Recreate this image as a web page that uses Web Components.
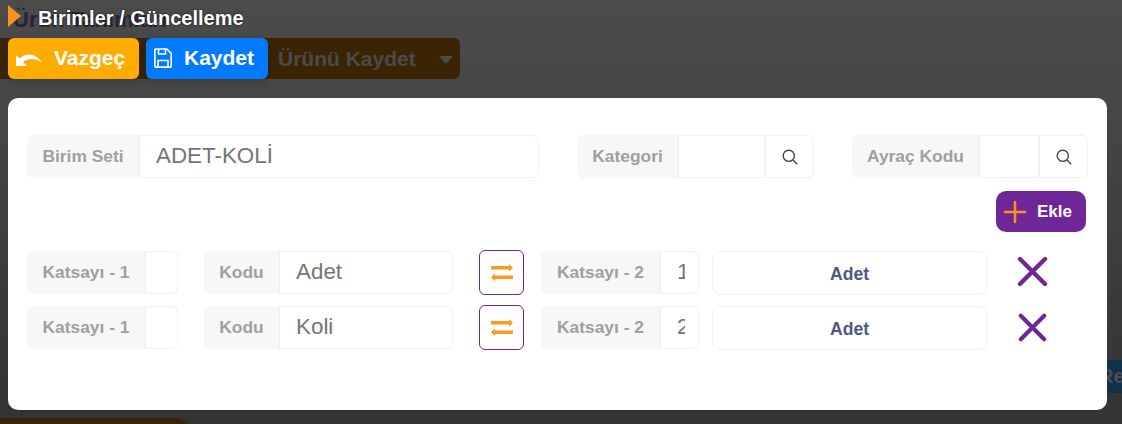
<!DOCTYPE html>
<html lang="tr">
<head>
<meta charset="utf-8">
<title>Birimler / Güncelleme</title>
<style>
  html, body { margin:0; padding:0; height:100%; overflow:hidden; background:#333; font-family:"Liberation Sans", Arial, sans-serif; }
</style>
</head>
<body>

<under-page></under-page>
<unit-modal>
  <div style="display:flex;flex-direction:column;gap:13px;">
    <div style="display:flex;height:43px;">
      <field-group label="Birim Seti" value="ADET-KOLİ" lw="112" iw="400"></field-group>
      <field-group label="Kategori" lw="101" iw="87" search style="margin-left:38px;"></field-group>
      <field-group label="Ayraç Kodu" lw="127" iw="60" search style="margin-left:38px;"></field-group>
    </div>
    <div style="display:flex;justify-content:flex-end;padding-right:2px;height:41px;">
      <add-button></add-button>
    </div>
    <div style="display:flex;flex-direction:column;gap:11px;margin-top:6px;">
      <unit-row kod="Adet" k2="1"></unit-row>
      <unit-row kod="Koli" k2="2" small></unit-row>
    </div>
  </div>
</unit-modal>

<script>
// arka plandaki (karartılmış) sayfa
class UnderPage extends HTMLElement {
  constructor() {
    super();
    this.attachShadow({ mode: "open" });
    this.shadowRoot.innerHTML = `
      <style>
        :host { display:flex; flex-direction:column; height:424px; overflow:hidden;
          background:linear-gradient(#4b4b4b 0, #474747 90px, #343434 400px, #333 424px); }
        div { flex:none; }
        .title { height:38px; box-sizing:border-box; padding:7px 0 0 13px; font-size:22px; font-weight:700; color:#2c2136; white-space:nowrap; }
        .bar { height:41px; width:460px; display:flex; align-items:center; background:#3a2404; border-radius:0 6px 6px 0; color:#4a4a4a; font-size:21px; font-weight:700; box-sizing:border-box; }
        .bar span { margin-left:278px; width:152px; white-space:nowrap; }
        .sep { align-self:stretch; width:30px; box-sizing:border-box; border-left:1px solid #352003; display:flex; align-items:center; justify-content:center; }
        .caret { width:0; height:0; border:7px solid transparent; border-top:8px solid #4a4a4a; border-bottom:0; margin-top:2px; }
        .re { margin:281px 0 0 auto; width:32px; height:33px; box-sizing:border-box; padding-left:9px; background:#10304e; color:#4d4d4d; font-size:20px; font-weight:700; line-height:33px; overflow:hidden; white-space:nowrap; }
        .foot { margin-top:25px; width:187px; height:12px; background:#3a2404; border-radius:0 10px 0 0; }
      </style>
      <div class="title">Ürün Tanımları</div>
      <div class="bar"><span>Ürünü Kaydet</span><div class="sep"><i class="caret"></i></div></div>
      <div class="re">Re</div>
      <div class="foot"></div>
    `;
  }
}
customElements.define("under-page", UnderPage);

class UnitModal extends HTMLElement {
  constructor() {
    super();
    this.attachShadow({ mode: "open" });
    this.shadowRoot.innerHTML = `
      <style>
        :host { position:absolute; inset:0; display:block; padding:0 8px; }
        .head { height:38px; display:flex; align-items:center; color:#fff; font-size:20px; font-weight:700; text-shadow:0 0 2px #000; }
        .arrow { width:0; height:0; border:11px solid transparent; border-left:13px solid #f7931e; border-right:0; margin-right:17px; position:relative; top:-3px; }
        .head span { position:relative; top:-1px; }
        .actions { display:flex; gap:7px; height:41px; }
        .card { margin-top:19px; width:1099px; height:312px; box-sizing:border-box; background:#fff; border-radius:10px; padding:37px 19px 0; }
      </style>
      <div class="head"><i class="arrow"></i><span>Birimler / Güncelleme</span></div>
      <div class="actions">
        <action-button kind="undo" style="--bg:#ffab00;width:131px;">Vazgeç</action-button>
        <action-button kind="save" style="--bg:#007bff;width:122px;">Kaydet</action-button>
      </div>
      <div class="card"><slot></slot></div>
    `;
  }
}
customElements.define("unit-modal", UnitModal);

const ICONS = {
  undo: `<svg width="26" height="15" viewBox="0 0 26 15"><path fill="#fff" d="M0 3V14H11L7 10C12 6 19 5.5 26 10.5C21 3 12-1 3.5 6.5Z"/></svg>`,
  save: `<svg width="18" height="20" viewBox="0 0 18 20" fill="none" stroke="#fff" stroke-width="1.6"><path d="M1.8 1h11l4.4 4.4v12.8a.9.9 0 0 1-.9.9H1.8a.9.9 0 0 1-.9-.9V1.9a.9.9 0 0 1 .9-.9z"/><path d="M4.5 1v5h7V1"/><path d="M4 19v-6.5h10V19"/></svg>`
};

class ActionButton extends HTMLElement {
  constructor() {
    super();
    this.attachShadow({ mode: "open" });
    this.shadowRoot.innerHTML = `
      <style>
        :host { display:flex; align-items:center; box-sizing:border-box; padding-bottom:1px; background:var(--bg); border-radius:6px; color:#fff; font-size:21px; font-weight:700; box-shadow:0 2px 8px rgba(0,0,0,.2); }
        .ic { display:flex; }
        :host([kind=undo]) .ic { margin:3px 12px 0 8px; }
        :host([kind=save]) .ic { margin:0 12px 0 8px; }
      </style>
      <span class="ic"></span><slot></slot>
    `;
  }
  connectedCallback() {
    this.shadowRoot.querySelector(".ic").innerHTML = ICONS[this.getAttribute("kind")] || "";
  }
}
customElements.define("action-button", ActionButton);

// etiket + değer kutusu, istenirse arama butonu
class FieldGroup extends HTMLElement {
  static get observedAttributes() { return ["value"]; }
  constructor() {
    super();
    this.attachShadow({ mode: "open" });
    this.shadowRoot.innerHTML = `
      <style>
        :host { display:flex; height:43px; font-family:"Liberation Sans", Arial, sans-serif; }
        .lbl { box-sizing:border-box; display:flex; align-items:center; justify-content:center; background:#f7f7f7; color:#a0a0a0; font-size:17.4px; font-weight:700; border-radius:6px 0 0 6px; white-space:nowrap; }
        .val { box-sizing:border-box; display:flex; align-items:center; padding:0 13px 0 16px; background:#fff; border:1px solid #f1f1f1; border-left-color:#eee; border-radius:0 6px 6px 0; color:#757575; font-size:22.4px; overflow:hidden; white-space:nowrap; }
        .val span { display:block; overflow:hidden; flex:1; position:relative; top:-1px; }
        :host([search]) .val { border-radius:0; }
        .srch { width:49px; box-sizing:border-box; display:flex; align-items:center; justify-content:center; border:1px solid #f1f1f1; border-radius:0 6px 6px 0; }
      </style>
      <div class="lbl"></div><div class="val"><span></span></div>
    `;
  }
  attributeChangedCallback() {
    this.shadowRoot.querySelector(".val span").textContent = this.getAttribute("value") || "";
  }
  connectedCallback() {
    const s = this.shadowRoot;
    const lbl = s.querySelector(".lbl"), val = s.querySelector(".val");
    lbl.textContent = this.getAttribute("label");
    lbl.style.width = this.getAttribute("lw") + "px";
    val.style.width = this.getAttribute("iw") + "px";
    if (this.hasAttribute("search") && !s.querySelector(".srch")) {
      const b = document.createElement("div");
      b.className = "srch";
      b.innerHTML = `<svg width="16" height="16" viewBox="0 0 16 16" fill="none" stroke="#444" stroke-width="1.4"><circle cx="6.8" cy="6.8" r="5.6"/><path d="M11 11l4.2 4.2"/></svg>`;
      s.appendChild(b);
    }
  }
}
customElements.define("field-group", FieldGroup);

class AddButton extends HTMLElement {
  constructor() {
    super();
    this.attachShadow({ mode: "open" });
    this.shadowRoot.innerHTML = `
      <style>
        :host { display:flex; align-items:center; width:90px; height:41px; box-sizing:border-box; padding-left:7px; background:#6f2798; border-radius:10px; color:#fff; font-size:17px; font-weight:700; }
        svg { margin-right:10px; }
      </style>
      <svg width="24" height="24" viewBox="0 0 24 24" stroke="#f7931e" stroke-width="2.6" stroke-linecap="round"><path d="M12 2v20M2 12h20"/></svg>
      <span>Ekle</span>
    `;
  }
}
customElements.define("add-button", AddButton);

class UnitRow extends HTMLElement {
  constructor() {
    super();
    this.attachShadow({ mode: "open" });
    this.shadowRoot.innerHTML = `
      <style>
        :host { display:flex; height:44px; align-items:flex-start; }
        field-group { height:43px; }
        .swap { width:45px; height:45px; box-sizing:border-box; margin:-1px 17px 0 26px; border:1px solid #6f2798; border-radius:6px; display:flex; align-items:center; justify-content:center; background:#fff; }
        .unit { width:275px; height:44px; box-sizing:border-box; margin:0 0 0 13px; border:1px solid #f1f1f1; border-radius:8px; display:flex; align-items:center; justify-content:center; color:#4c5a80; font-size:17.6px; font-weight:700; padding-top:3px; }
        .del { margin:5px 0 0 30px; display:flex; width:31px; height:31px; }
        :host([small]) .del { margin:7px 0 0 31px; width:29px; height:29px; }
      </style>
      <field-group class="k1" label="Katsayı - 1" lw="118" iw="33"></field-group>
      <field-group class="kod" style="margin-left:26px;" lw="75" iw="174" label="Kodu"></field-group>
      <div class="swap">
        <svg width="22" height="17" viewBox="0 0 22 17" fill="#fb9a1e"><path d="M0 2h18V0l4 3.75-4 3.75v-2H0z"/><path d="M22 11.5H4v-2L0 13.25 4 17v-2h18z"/></svg>
      </div>
      <field-group class="k2" label="Katsayı - 2" lw="119" iw="39"></field-group>
      <div class="unit">Adet</div>
      <svg class="del" viewBox="0 0 31 31" stroke="#6f2798" stroke-width="4.4" stroke-linecap="round"><path d="M3 3l25 25M28 3L3 28"/></svg>
    `;
  }
  connectedCallback() {
    const s = this.shadowRoot;
    s.querySelector(".kod").setAttribute("value", this.getAttribute("kod"));
    s.querySelector(".k2").setAttribute("value", this.getAttribute("k2"));
  }
}
customElements.define("unit-row", UnitRow);
</script>
</body>
</html>
